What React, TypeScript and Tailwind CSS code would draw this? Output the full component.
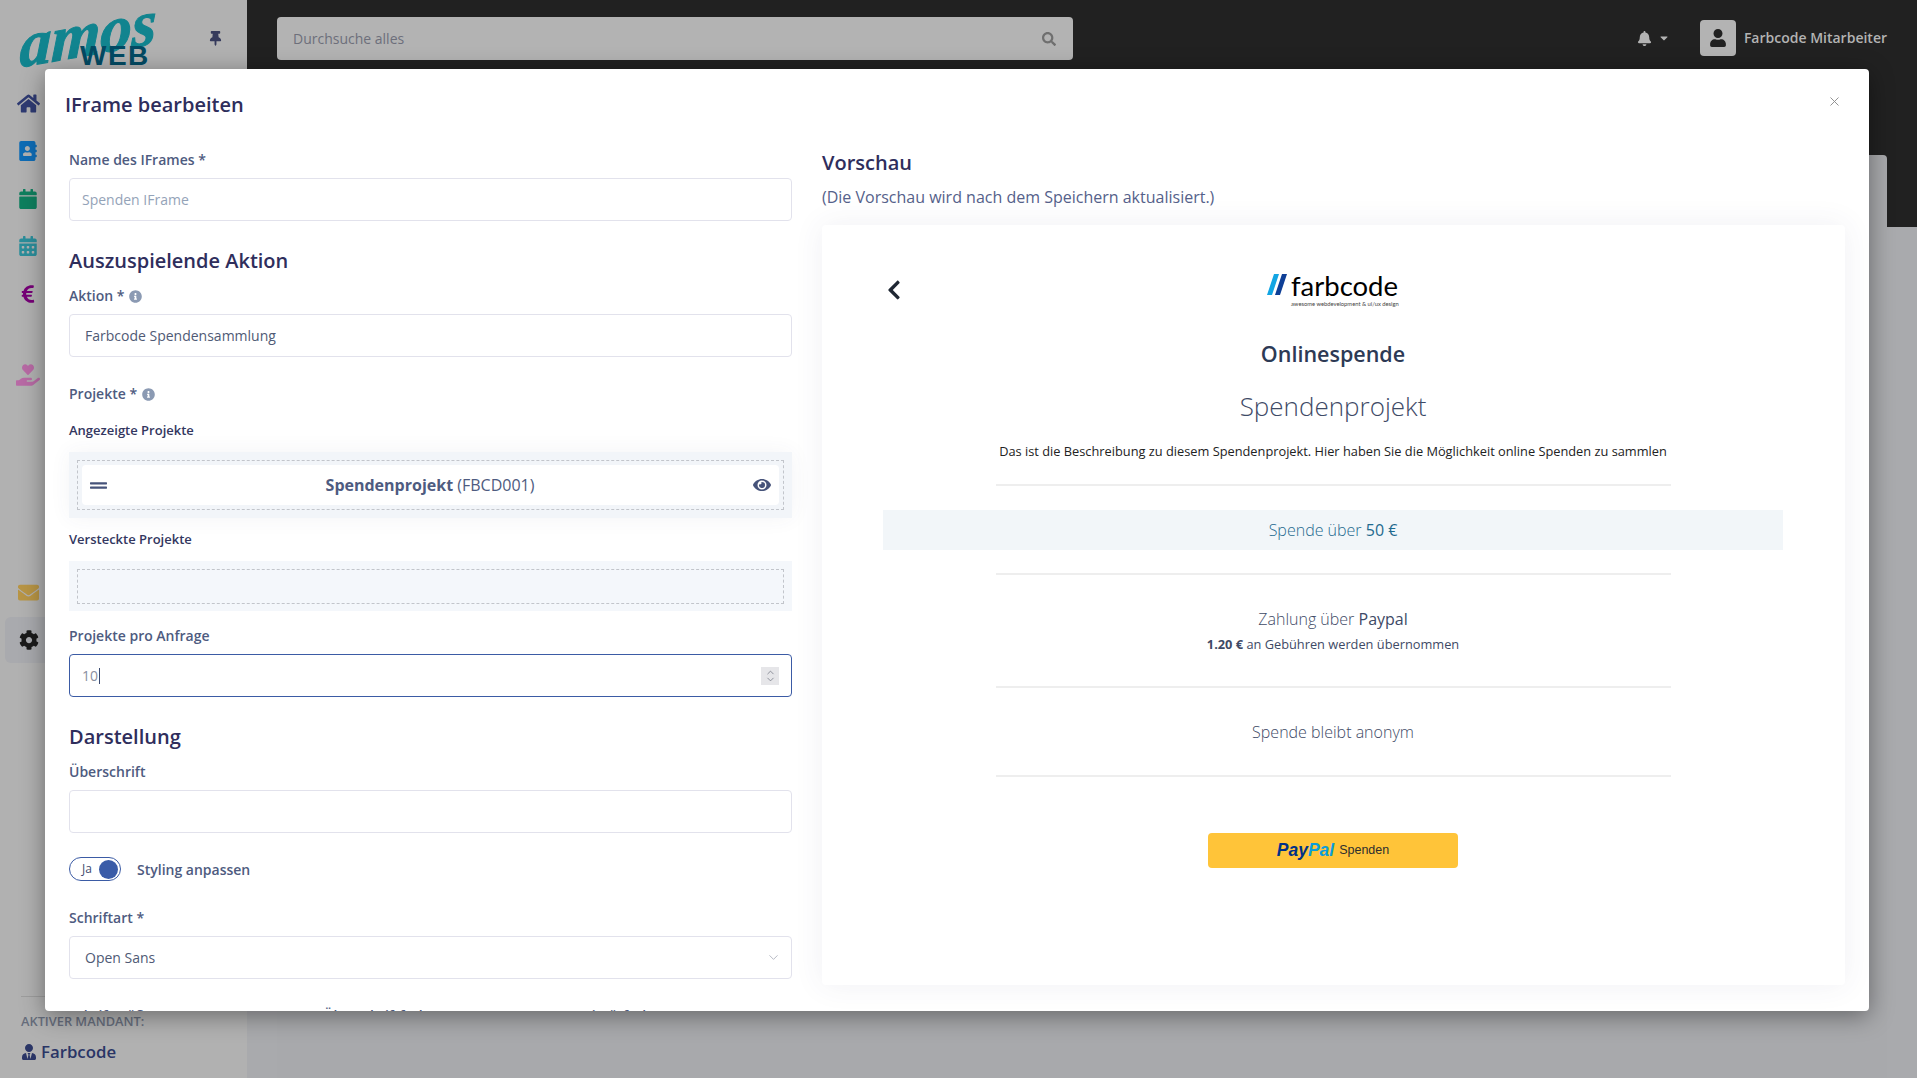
import React from "react";
import {
  FaAddressBook,
  FaBell,
  FaCalendar,
  FaCalendarAlt,
  FaCaretDown,
  FaChevronLeft,
  FaCog,
  FaEnvelope,
  FaEuroSign,
  FaEye,
  FaGripLines,
  FaHandHoldingHeart,
  FaHome,
  FaInfoCircle,
  FaSearch,
  FaThumbtack,
  FaUser,
  FaUserTie,
} from "react-icons/fa";
import { ChevronDown, ChevronUp, X } from "lucide-react";

function Label({ children, info, className = "" }: { children: React.ReactNode; info?: boolean; className?: string }) {
  return (
    <div className={`flex h-5 items-center gap-1 text-sm leading-5 font-semibold text-[#4e5b80] ${className}`}>
      {children}
      {info && <FaInfoCircle className="ml-px text-[13px] text-[#8b9ab3]" />}
    </div>
  );
}

function Heading({ children, className = "" }: { children: React.ReactNode; className?: string }) {
  return <h3 className={`h-7 text-xl leading-7 font-semibold text-[#2f2e5c] ${className}`}>{children}</h3>;
}

function TextInput({ value, placeholder, className = "px-[15px]" }: { value?: string; placeholder?: string; className?: string }) {
  return (
    <input
      readOnly
      value={value}
      placeholder={placeholder}
      className={`mt-2 block h-[43px] w-full rounded border border-[#e2e2ec] bg-white text-sm text-[#4f5a75] outline-none placeholder:text-[#94a3b8] ${className}`}
    />
  );
}

function Divider({ className = "" }: { className?: string }) {
  return <div className={`ml-[113px] h-0.5 w-[675px] bg-[#eeeeee] ${className}`} />;
}

function Sidebar() {
  const rowClass = "flex h-[47.5px] w-[46px] items-center justify-center pl-[10px]";
  return (
    <aside className="flex h-full w-[247px] shrink-0 flex-col bg-[#b1b1b1]">
      <div className="relative flex h-20 shrink-0 pt-[24px]">
        <div className="w-[200px] pl-5">
          <div className="origin-left -rotate-[10deg] -skew-x-12 font-['Liberation_Serif',serif] text-[64px] leading-[44px] font-bold text-[#11848f] italic [-webkit-text-stroke:1px_#11848f]">
            amos
          </div>
          <div className="relative mt-[-24px] pl-[60px] font-['Liberation_Sans',sans-serif] text-[28px] leading-6 font-bold tracking-[1.5px] text-[#034a63]">
            WEB
          </div>
        </div>
        <FaThumbtack className="mt-[7px] ml-2 text-[15px] text-[#353a5c]" />
      </div>
      <nav className="flex flex-col">
        <div className={rowClass}><FaHome className="text-[23px] text-[#2e3a72]" /></div>
        <div className={rowClass}><FaAddressBook className="text-[20px] text-[#0f6cb5]" /></div>
        <div className={rowClass}><FaCalendar className="text-[20px] text-[#0e7f5e]" /></div>
        <div className={rowClass}><FaCalendarAlt className="text-[20px] text-[#2b8e9b]" /></div>
        <div className={rowClass}><FaEuroSign className="text-[20px] text-[#760077]" /></div>
        <div className={`${rowClass} mt-[34px]`}><FaHandHoldingHeart className="text-[24px] text-[#b86aa5]" /></div>
        <div className={`${rowClass} mt-[170px]`}><FaEnvelope className="text-[21px] text-[#b89545]" /></div>
        <div className="ml-[5px] flex h-[46px] w-[60px] items-center rounded-md bg-[#a9aaae] pl-[14px]">
          <FaCog className="text-[20px] text-[#1a1a1a]" />
        </div>
      </nav>
      <div className="mt-auto pr-5 pb-3.5 pl-[21px]">
        <div className="h-px bg-[#9d9d9d]" />
        <div className="mt-4 text-[12.8px] leading-4 font-semibold text-[#666d7c]">AKTIVER MANDANT:</div>
        <div className="mt-[11px] flex h-6 items-center gap-1 text-[16.8px] font-semibold text-[#2a3566]">
          <FaUserTie className="text-[16px]" />
          Farbcode
        </div>
      </div>
    </aside>
  );
}

function TopBar() {
  return (
    <div className="flex h-[227px] items-start bg-[#212121] px-[30px] pt-[17px]">
      <div className="flex h-[43px] w-[796px] items-center justify-between rounded bg-[#b3b3b3] pr-[17px] pl-4 text-sm text-[#6d6f7b]">
        Durchsuche alles
        <FaSearch className="text-[14px] text-[#6f6f6f]" />
      </div>
      <div className="mt-[3px] ml-auto flex items-center text-[#b3b3b3]">
        <FaBell className="text-[15px]" />
        <FaCaretDown className="ml-1.5 text-[12px]" />
        <div className="ml-[30px] flex h-9 w-9 items-center justify-center rounded bg-[#b3b3b3]">
          <FaUser className="text-[18px] text-[#212121]" />
        </div>
        <span className="ml-2 text-sm font-semibold">Farbcode Mitarbeiter</span>
      </div>
    </div>
  );
}

function Form() {
  return (
    <div className="w-[723px] shrink-0 pt-[9px]">
      <Label>Name des IFrames *</Label>
      <TextInput placeholder="Spenden IFrame" className="px-3" />

      <Heading className="mt-[26px]">Auszuspielende Aktion</Heading>
      <Label info className="mt-[11px]">Aktion *</Label>
      <TextInput value="Farbcode Spendensammlung" />

      <Label info className="mt-[27px]">Projekte *</Label>
      <div className="mt-4 h-5 text-[13px] leading-5 font-semibold text-[#33375f]">Angezeigte Projekte</div>
      <div className="mt-3 h-[66px] bg-[#f2f5f9] px-2 py-2 shadow-[0_0_20px_rgba(60,70,110,0.06)]">
        <div className="h-[50px] border border-dashed border-[#c2c5cb] p-1">
          <div className="flex h-10 items-center rounded bg-white px-2 text-base text-[#4e5b80]">
            <FaGripLines className="text-[17px] text-[#46537a]" />
            <div className="flex-1 text-center">
              <span className="font-bold">Spendenprojekt</span> (FBCD001)
            </div>
            <FaEye className="text-[18px] text-[#46537a]" />
          </div>
        </div>
      </div>

      <div className="mt-[11px] h-5 text-[13px] leading-5 font-semibold text-[#33375f]">Versteckte Projekte</div>
      <div className="mt-3 h-[50px] bg-[#f4f7fb] px-2 py-2">
        <div className="h-[35px] border border-dashed border-[#c2c5cb]" />
      </div>

      <Label className="mt-[15px]">Projekte pro Anfrage</Label>
      <div className="mt-2 flex h-[43px] items-center rounded border border-[#3b5ba5] bg-white pr-3 pl-3 text-sm text-[#8a8fa0]">
        10
        <span className="ml-px h-4 w-px bg-[#3a4a70]" />
        <div className="ml-auto flex h-[18px] w-[18px] flex-col items-center justify-center bg-[#e6e6e9] text-[#666a78]">
          <ChevronUp size={11} strokeWidth={1.5} className="-mb-0.5" />
          <ChevronDown size={11} strokeWidth={1.5} className="-mt-0.5" />
        </div>
      </div>

      <Heading className="mt-[26px]">Darstellung</Heading>
      <Label className="mt-[11px]">Überschrift</Label>
      <TextInput />

      <div className="mt-6 flex h-6 items-center">
        <div className="flex h-6 w-[52px] items-center justify-between rounded-full border border-[#3b5ba5] bg-white pr-[2px] pl-3 text-xs text-[#3f4a6e]">
          Ja
          <span className="h-[19px] w-[19px] rounded-full bg-[#3a5ca8]" />
        </div>
        <span className="mt-px ml-4 text-sm font-semibold text-[#4e5b80]">Styling anpassen</span>
      </div>

      <Label className="mt-[27px]">Schriftart *</Label>
      <div className="mt-2 flex h-[43px] items-center justify-between rounded border border-[#e2e2ec] bg-white pr-[10px] pl-[15px] text-sm text-[#4f5a75]">
        Open Sans
        <ChevronDown size={15} strokeWidth={1} className="text-[#8b90a0]" />
      </div>

      <div className="mt-[27px] grid grid-cols-3 gap-[39px]">
        <Label>Schriftgröße</Label>
        <Label>Überschriftfarbe</Label>
        <Label>Primärfarbe</Label>
      </div>
    </div>
  );
}

function Preview() {
  return (
    <div className="w-[1023px] shrink-0 pt-2">
      <Heading>Vorschau</Heading>
      <p className="mt-2 h-6 text-base leading-6 text-[#55618a]">(Die Vorschau wird nach dem Speichern aktualisiert.)</p>
      <div className="mt-4 h-[760px] rounded bg-white pt-[49px] text-center text-[#3e4a66] shadow-[0_0_30px_rgba(60,70,110,0.08)]">
        <div className="ml-[61px] w-[900px]">
          <div className="grid h-[34px] grid-cols-[1fr_132px_1fr] text-left">
            <FaChevronLeft className="mt-[5px] text-[22px] text-[#1f2733]" />
            <div className="relative pl-[24px] font-['Lato',sans-serif] text-black">
              {/* logo stripes */}
              <svg viewBox="0 0 20 21" className="absolute top-0 left-0 h-[21px] w-5">
                <polygon points="7,0 12,0 5,21 0,21" fill="#12a5e3" />
                <polygon points="15,0 20,0 13,21 8,21" fill="#0e3f96" />
              </svg>
              <div className="h-[26px] text-[27.5px] leading-[23px]">farbcode</div>
              <div className="text-[5.8px] leading-[8px] whitespace-nowrap text-[#444444]">
                awesome webdevelopment &amp; ui/ux design
              </div>
            </div>
            <div />
          </div>

          <h2 className="mt-8 h-7 text-[21.5px] leading-7 font-semibold text-[#2d3a55]">Onlinespende</h2>
          <div className="mt-[19px] h-[38px] text-[26px] leading-[38px] font-light">Spendenprojekt</div>
          <p className="mt-[17px] h-[18px] text-[12.8px] leading-[18px] text-[#222222]">
            Das ist die Beschreibung zu diesem Spendenprojekt. Hier haben Sie die Möglichkeit online Spenden zu sammlen
          </p>
          <Divider className="mt-6" />
          <div className="mt-6 flex h-10 items-center justify-center bg-[#f2f6f9] text-base font-light text-[#1f6a8f]">
            <span>
              Spende über <span className="font-normal">50 €</span>
            </span>
          </div>
          <Divider className="mt-[23px]" />
          <div className="mt-8 h-6 text-base leading-6 font-light">
            Zahlung über <span className="font-normal">Paypal</span>
          </div>
          <div className="mt-1 h-[18px] text-[12.8px] leading-[18px]">
            <span className="font-bold">1.20 €</span> an Gebühren werden übernommen
          </div>
          <Divider className="mt-[33px]" />
          <div className="mt-8 h-6 text-base leading-6 font-light">Spende bleibt anonym</div>
          <Divider className="mt-[31px]" />
          <div className="mt-14 ml-[325px] flex h-[35px] w-[250px] items-center justify-center gap-[5px] rounded bg-[#ffc439] font-['Liberation_Sans',sans-serif]">
            <span className="text-[17.5px] font-bold text-[#003087] italic">
              Pay<span className="text-[#0a9ddc]">Pal</span>
            </span>
            <span className="text-[12.5px] text-[#2c2e2f]">Spenden</span>
          </div>
        </div>
      </div>
    </div>
  );
}

export default function App() {
  return (
    <div className="relative flex h-screen w-full overflow-hidden bg-[#a9aaad] font-['Open_Sans',sans-serif]">
      <Sidebar />
      <main className="flex min-w-0 flex-1 flex-col">
        <TopBar />
        <div className="mx-[30px] -mt-[72px] flex-1 rounded-t bg-[#a8a9ac]" />
      </main>

      {/* modal dialog */}
      <div className="absolute top-[69px] left-[45px] flex h-[942px] w-[1824px] flex-col overflow-hidden rounded bg-white shadow-[0_5px_25px_rgba(0,0,0,0.4)]">
        <header className="flex h-[72px] shrink-0 items-center justify-between pr-[27px] pl-5">
          <h1 className="text-xl font-semibold text-[#2f2e5c]">IFrame bearbeiten</h1>
          <X size={15} strokeWidth={1.5} className="-mt-2 text-[#8c8c8c]" />
        </header>
        <div className="flex min-h-0 flex-1 items-start gap-[30px] pl-6">
          <Form />
          <Preview />
        </div>
      </div>
    </div>
  );
}
